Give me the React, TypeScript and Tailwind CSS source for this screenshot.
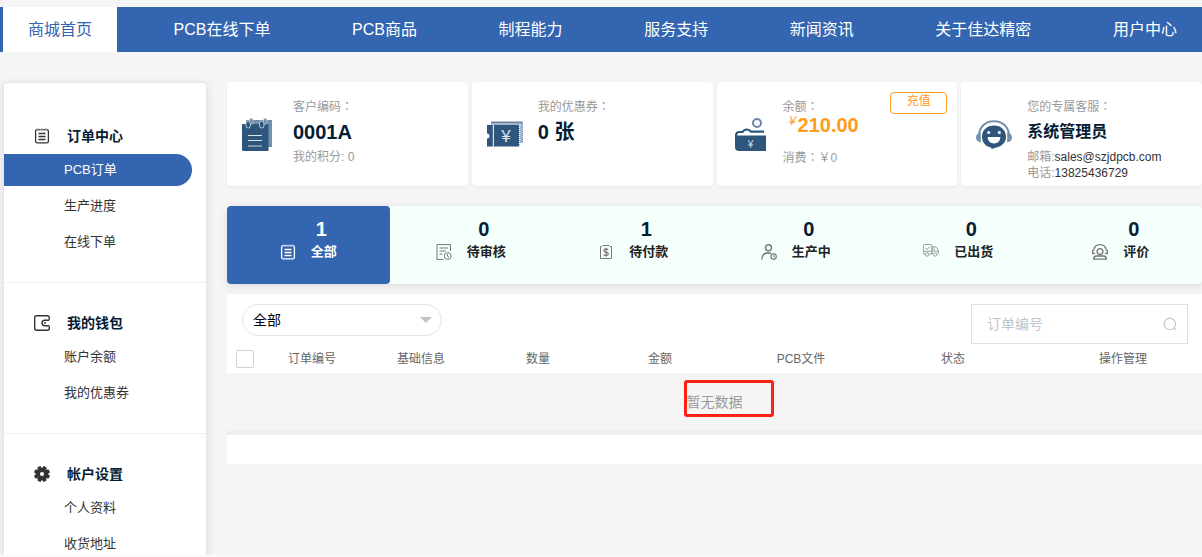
import type { ReactNode } from 'react';
import clsx from 'clsx';

// ── Icons ─────────────────────────────────────────────────────────────────────

const ListIcon = () => (
  <svg viewBox="0 0 16 16" className="w-4 h-4" fill="none" stroke="currentColor" strokeWidth="1.3">
    <path d="M3 1.7Q1.600 1.700 1.600 3.200v10q0 1.600 1.600 1.600h9.600q1.600 0 1.600-1.600v-10q0-1.500-1.400-1.500M5 1.700h1.700M9.300 1.700H11" />
    <path d="M4 .500v2.200M8 .500v2.200M12 .500v2.200" strokeWidth="1.100" />
    <path d="M4.500 5.500h7M4.500 8.500h7M4.500 11.500h7" />
  </svg>
);

const WalletIcon = () => (
  <svg viewBox="0 0 16 16" className="w-4 h-4" fill="none" stroke="currentColor" strokeWidth="1.4">
    <path d="M15.3 4.8V2.7Q15.300.700 13.300.700H2.700Q.700.700.700 2.700v10.600q0 2 2 2h10.600q2 0 2-2v-2.100" />
    <path d="M15.300 5.200h-4.500a2.800 2.800 0 0 0 0 5.600h4.500" />
    <circle cx="11" cy="8" r=".9" fill="currentColor" stroke="none" />
  </svg>
);

// square tooth plus its three copies, each crossing the whole wheel
const GearIcon = () => (
  <svg viewBox="0 0 16 16" className="w-4 h-4">
    <g fill="currentColor">
      <circle cx="8" cy="8" r="6.300" />
      {[22.5, 67.5, 112.5, 157.5].map((angle) => (
        <path key={angle} d="M6.100 1 6.600 0h2.800l.5 1v14l-.5 1H6.600l-.5-1z" transform={`rotate(${angle} 8 8)`} />
      ))}
    </g>
    <circle cx="8" cy="8" r="2.100" fill="#fff" />
  </svg>
);

const ReviewIcon = () => (
  <svg viewBox="0 0 16 16" className="w-4 h-4" fill="none" stroke="currentColor">
    <path d="M14.500 7V.6H1v14.800h6.500M3.500 4h8.500M3.500 7h6.500M3.500 10h3" />
    <circle cx="11.700" cy="12" r="3.400" />
    <path d="M11.500 10v2.200l1.500 1" />
  </svg>
);

const PayIcon = () => (
  <svg viewBox="0 0 16 16" className="w-4 h-4" fill="none" stroke="currentColor">
    <path d="M4 2.500H2.500v12h11v-12H12M4.500 1.500h7" />
    <path d="M10.200 5.800Q9.500 4.900 8 4.900q-2.100 0-2.100 1.600 0 1.300 2.200 1.700 2.200.4 2.200 1.800T8 11.600q-1.600 0-2.400-1M8 3.800v9" strokeWidth="1.200" />
  </svg>
);

const WorkerIcon = () => (
  <svg viewBox="0 0 16 16" className="w-4 h-4" fill="none" stroke="currentColor" strokeWidth="1.400">
    <circle cx="7.500" cy="3.700" r="3" />
    <path d="M.8 15.600q.3-6.500 6.500-6.800 1.500 0 2.700.5" />
    <circle cx="12.600" cy="12.600" r="2.700" strokeWidth="1.200" />
    <path d="M12.500 11.300v1.500h1.200" strokeWidth=".9" />
  </svg>
);

const TruckIcon = () => (
  <svg viewBox="0 0 16 16" className="w-4 h-4 opacity-80" fill="none" stroke="currentColor" strokeWidth=".9">
    <path d="M2.300 10H1q-.6 0-.6-.7V2Q.4.500 1.900.5h5.700q1.500 0 1.500 1.500v8H5.700M9.100 10V3h3.500q1 0 1.500 1l1.300 2.500V9.300q0 .7-.7.7" />
    <path d="M2.300 3.900l1.600 1.700L7 2.300M.5 7.300h8M11 4.600v2.400h4" />
    <circle cx="4" cy="10.500" r="1.700" />
    <circle cx="12.200" cy="10.500" r="1.700" />
  </svg>
);

const RateIcon = () => (
  <svg viewBox="0 0 16 16" className="w-4 h-4" fill="none" stroke="currentColor" strokeWidth="1.300">
    <path d="M1.600 6.500Q2.600.700 8 .700t6.400 5.800" />
    <path d="M.7 6v3.500h2.100M15.300 6v3.500h-2.100" />
    <circle cx="8" cy="7.600" r="2.900" />
    <path d="M1.500 15.200q.3-3 3-3.200h7q2.700.2 3 3.200z" />
  </svg>
);

const NotepadArt = () => (
  <svg viewBox="0 0 30 33" className="w-[30px] h-[33px]">
    <path d="M4 2h26v27H4z" fill="#7590ac" />
    <path d="M1 6h25.500v27H1.500Q0 33 0 31.500V7q0-1 1-1z" fill="#2e567d" />
    <g fill="#2e567d" stroke="#dbe4ec" strokeWidth=".8">
      <rect x="4" y="3" width="4.500" height="7" rx="2.200" />
      <rect x="17.500" y="3" width="4.500" height="7" rx="2.200" />
    </g>
    <g fill="#7590ac" stroke="#dbe4ec" strokeWidth=".5">
      <rect x="7.500" y=".3" width="3.500" height="6" rx="1.700" />
      <rect x="21.500" y=".3" width="3.500" height="6" rx="1.700" />
    </g>
    <path d="M6 17.500h14M6 22.500h14" stroke="#dbe4ec" strokeWidth="1" />
    <path d="M6 28h14" stroke="#93a9be" strokeWidth="1.500" />
  </svg>
);

const CouponArt = () => (
  <svg viewBox="0 0 36 26" className="w-9 h-[26px]">
    <path d="M4 .5h32v21.500h-3V4H4z" fill="#6685a3" />
    <path d="M4 3h30v19" fill="none" stroke="#fff" strokeWidth=".8" />
    <path d="M35.800 1v22" stroke="#fff" strokeWidth="1" strokeDasharray="1 1" />
    <path d="M0 4h32.500v21.500H0v-8a2.500 2.500 0 0 0 0-5z" fill="#2e567d" />
    <path d="M6.300 4v21.500" stroke="#fff" strokeWidth="1" />
    <path d="M32.500 4v21.500" stroke="#fff" strokeWidth="1.200" strokeDasharray="1 1" />
    <text x="19" y="21" textAnchor="middle" fontSize="17" fill="#dfe7ee" className="font-['Liberation_Sans',sans-serif]">¥</text>
  </svg>
);

const PurseArt = () => (
  <svg viewBox="0 0 31 33" className="w-[31px] h-[33px]">
    <circle cx="22" cy="5" r="4" fill="none" stroke="#6a88a8" strokeWidth="2" />
    <path d="M0 17.500h31V33H4q-4 0-4-4z" fill="#2e567d" />
    <path d="M1 19v-1.500q0-3.500 3.500-3.500h3q1.500-2.500 4.500-2.500 2.500 0 4 2.200h13" fill="none" stroke="#2e567d" strokeWidth="2.200" />
    <text x="15.500" y="29.500" textAnchor="middle" fontSize="10" fill="#d5dee8" className="font-['Liberation_Sans',sans-serif]">¥</text>
  </svg>
);

const ServiceArt = () => (
  <svg viewBox="0 0 36 29" className="w-9 h-[29px]">
    <path d="M3 15C3.500 6.500 9.500 1.200 18 1.200S32.500 6.500 33 15" fill="none" stroke="#7590ac" strokeWidth="2" />
    <path d="M4.800 12.500v10Q0 21.500 0 17.500t4.800-5zM31.200 12.500v10q4.800-1 4.800-5t-4.800-5z" fill="#7590ac" />
    <path d="M18 5.500c7 0 12 4.800 12 11.200 0 5.200-3.300 9-8.200 10.300L15.500 29l-.3-1.600C9.500 26.500 6 22.300 6 16.700 6 10.300 11 5.500 18 5.500z" fill="#2e567d" />
    <circle cx="12.700" cy="12.500" r="1.600" fill="#fff" />
    <circle cx="23.300" cy="12.500" r="1.600" fill="#fff" />
    <path d="M11.500 17h13q-.7 6.500-6.500 6.500T11.500 17z" fill="#fff" />
  </svg>
);

// ── Data ──────────────────────────────────────────────────────────────────────

const NAV = ['商城首页', 'PCB在线下单', 'PCB商品', '制程能力', '服务支持', '新闻资讯', '关于佳达精密', '用户中心'];

const MENU = [
  { title: '订单中心', icon: <ListIcon />, items: ['PCB订单', '生产进度', '在线下单'] },
  { title: '我的钱包', icon: <WalletIcon />, items: ['账户余额', '我的优惠券'] },
  { title: '帐户设置', icon: <GearIcon />, items: ['个人资料', '收货地址'] },
];

const STATS = [
  { count: 1, label: '全部', icon: <ListIcon /> },
  { count: 0, label: '待审核', icon: <ReviewIcon /> },
  { count: 1, label: '待付款', icon: <PayIcon /> },
  { count: 0, label: '生产中', icon: <WorkerIcon /> },
  { count: 0, label: '已出货', icon: <TruckIcon /> },
  { count: 0, label: '评价', icon: <RateIcon /> },
];

const COLUMNS = [
  { label: '订单编号', width: 'w-[68px]' },
  { label: '基础信息', width: 'w-[150px]' },
  { label: '数量', width: 'w-[84px]' },
  { label: '金额', width: 'w-[160px]' },
  { label: 'PCB文件', width: 'w-[122px]' },
  { label: '状态', width: 'w-[182px]' },
  { label: '操作管理', width: 'w-[158px]' },
];

// ── Pieces ────────────────────────────────────────────────────────────────────

// full-width colon, centred in its box
const Colon = () => <span className="font-['Noto_Sans_CJK_TC',sans-serif]">：</span>;

const InfoCard = ({ art, label, children }: { art: ReactNode; label: string; children: ReactNode }) => (
  <section className="relative flex h-[104px] rounded bg-white shadow-[0_1px_3px_rgba(0,0,0,0.05)] text-xs leading-4 text-[#999]">
    <div className="w-[66px] flex-shrink-0 flex items-center pl-[15px]">{art}</div>
    <div className="pt-4 whitespace-nowrap">
      <div>{label}<Colon /></div>
      {children}
    </div>
  </section>
);

const Sidebar = () => (
  <aside className="w-[204px] flex-shrink-0 overflow-hidden rounded-t border border-[#e6e6e6] border-b-0 bg-white pt-[13px] shadow-[0_2px_10px_rgba(0,0,0,0.1)]">
    {MENU.map((group, g) => (
      <nav key={group.title} aria-label={group.title} className="border-b border-[#f0f0f0] pt-[22px] pb-5">
        <h2 className="flex h-9 items-center gap-[17px] pl-[30px] text-sm font-bold text-[#061c33]">
          <span className="text-[#333]">{group.icon}</span>
          {group.title}
        </h2>
        {group.items.map((item, i) => (
          <a
            key={item}
            href="#"
            className={clsx(
              'mb-1 mr-[14px] flex h-8 items-center rounded-r-full pl-[60px] text-[13px]',
              g === 0 && i === 0 ? 'bg-[#3365b1] text-white' : 'text-[#333]',
            )}
          >
            {item}
          </a>
        ))}
      </nav>
    ))}
  </aside>
);

const Stats = () => (
  <div className="mt-5 grid grid-cols-6 rounded bg-[#f5fffc] shadow-[0_2px_10px_rgba(0,0,0,0.1)]">
    {STATS.map((stat, i) => (
      <button
        key={stat.label}
        type="button"
        className={clsx(
          'rounded pt-[11px] pb-[21px] text-center font-bold',
          i === 0 ? 'bg-[#3365b1] text-white' : 'text-[#061c33]',
        )}
      >
        <span className="block pl-[26px] text-xl leading-6">{stat.count}</span>
        <span className="flex h-[22px] items-center justify-center gap-[15px] text-[13px]">
          <span className={i === 0 ? 'text-white' : 'text-[#777]'}>{stat.icon}</span>
          <span className={i === 0 ? 'text-white' : 'text-[#222]'}>{stat.label}</span>
        </span>
      </button>
    ))}
  </div>
);

const Orders = () => (
  <section className="relative mt-[10px] bg-white">
    <div className="flex items-start justify-between pt-[10px] pl-[15px] pr-[14px]">
      <div className="relative">
        <select
          aria-label="订单状态"
          className="h-8 w-[200px] appearance-none rounded-full border border-[#e6e6e6] bg-white pl-[10px] pr-8 text-sm text-black"
        >
          <option>全部</option>
        </select>
        <svg viewBox="0 0 12 6" className="pointer-events-none absolute right-[10px] top-[13px] h-[6px] w-3">
          <path d="M0 0h12L6 6z" fill="#c2c2c2" />
        </svg>
      </div>
      <label className="flex h-10 w-[217px] items-center border border-[#dcdfe6] bg-white pl-[15px] pr-[10px]">
        <input
          type="text"
          aria-label="订单编号"
          placeholder="订单编号"
          className="min-w-0 flex-1 text-sm outline-none placeholder:text-[#c0c4cc]"
        />
        <svg viewBox="0 0 14 14" className="h-[14px] w-[14px]" fill="none" stroke="#c0c4cc" strokeWidth="1.100">
          <circle cx="6.800" cy="6.800" r="5.700" />
          <path d="M10.800 10.800l2.200 2.200" />
        </svg>
      </label>
    </div>
    <table className="w-full table-fixed border-collapse">
      <thead>
        <tr className="h-[29px] text-xs text-[#666]">
          <th className="w-[51px] p-0 pl-[9px]">
            <input
              type="checkbox"
              aria-label="全选"
              className="block h-[18px] w-[18px] appearance-none rounded-xs border border-[#d2d2d2] bg-white checked:bg-[#3365b1]"
            />
          </th>
          {COLUMNS.map((col) => (
            <th key={col.label} className={`${col.width} p-0 text-center font-normal`}>{col.label}</th>
          ))}
        </tr>
      </thead>
      <tbody>
        <tr className="h-[57px] bg-[#f5f5f5]">
          <td colSpan={8} className="p-0 text-center text-sm text-[#999]">
            <span className="relative inline-block">
              暂无数据
              <span className="absolute -left-[3px] -top-3 h-[37px] w-[90px] rounded-[3px] border-3 border-[#fb2115]" />
            </span>
          </td>
        </tr>
      </tbody>
    </table>
    <div className="h-[5px] bg-[#efefef]" />
    <div className="h-[29px]" />
  </section>
);

// ── Page ──────────────────────────────────────────────────────────────────────

const App = () => (
  <div className="flex h-screen flex-col overflow-hidden bg-[#f5f5f5] font-['Liberation_Sans','Noto_Sans_CJK_SC',sans-serif]">
    <header className="mt-[7px] flex-shrink-0 bg-[#3365b1] pl-[3px]">
      <nav className="flex justify-between">
        {NAV.map((item, i) => (
          <a
            key={item}
            href="#"
            className={clsx(
              'flex h-[45px] items-center whitespace-nowrap px-[25px] text-base',
              i === 0 ? 'bg-white text-[#3365b1]' : 'text-white',
            )}
          >
            {item}
          </a>
        ))}
      </nav>
    </header>

    <div className="flex min-h-0 flex-1 gap-5 overflow-hidden pt-[30px] pl-[3px]">
      <Sidebar />
      <main className="min-w-0 flex-1">
        <div className="grid grid-cols-4 gap-1">
          <InfoCard art={<NotepadArt />} label="客户编码">
            <div className="text-xl leading-[34px] font-bold text-[#061c33]">0001A</div>
            <div>我的积分: 0</div>
          </InfoCard>
          <InfoCard art={<CouponArt />} label="我的优惠券">
            <div className="text-xl leading-[34px] font-bold text-[#061c33]">0 张</div>
          </InfoCard>
          <InfoCard art={<div className="pl-[3px]"><PurseArt /></div>} label="余额">
            <div className="mb-3.5 flex pl-[3px] text-xl leading-5 font-bold text-[#ff9c19]">
              <span className="text-xs leading-3 font-normal italic">￥</span>210.00
            </div>
            <div>消费<Colon />￥0</div>
            <button
              type="button"
              className="absolute right-[10px] top-[10px] h-[22px] w-[57px] rounded border border-[#ff9c19] pb-1 text-xs leading-4 text-[#ff9c19]"
            >
              充值
            </button>
          </InfoCard>
          <InfoCard art={<ServiceArt />} label="您的专属客服">
            <div className="text-base leading-[34px] font-bold text-[#061c33]">系统管理员</div>
            <div>邮箱:<a href="mailto:sales@szjdpcb.com" className="text-[#333]">sales@szjdpcb.com</a></div>
            <div>电话:<a href="tel:13825436729" className="text-[#333]">13825436729</a></div>
          </InfoCard>
        </div>
        <Stats />
        <Orders />
      </main>
    </div>
    <div className="h-[2px] flex-shrink-0 bg-[#f9fbfa]" />
  </div>
);

export default App;
